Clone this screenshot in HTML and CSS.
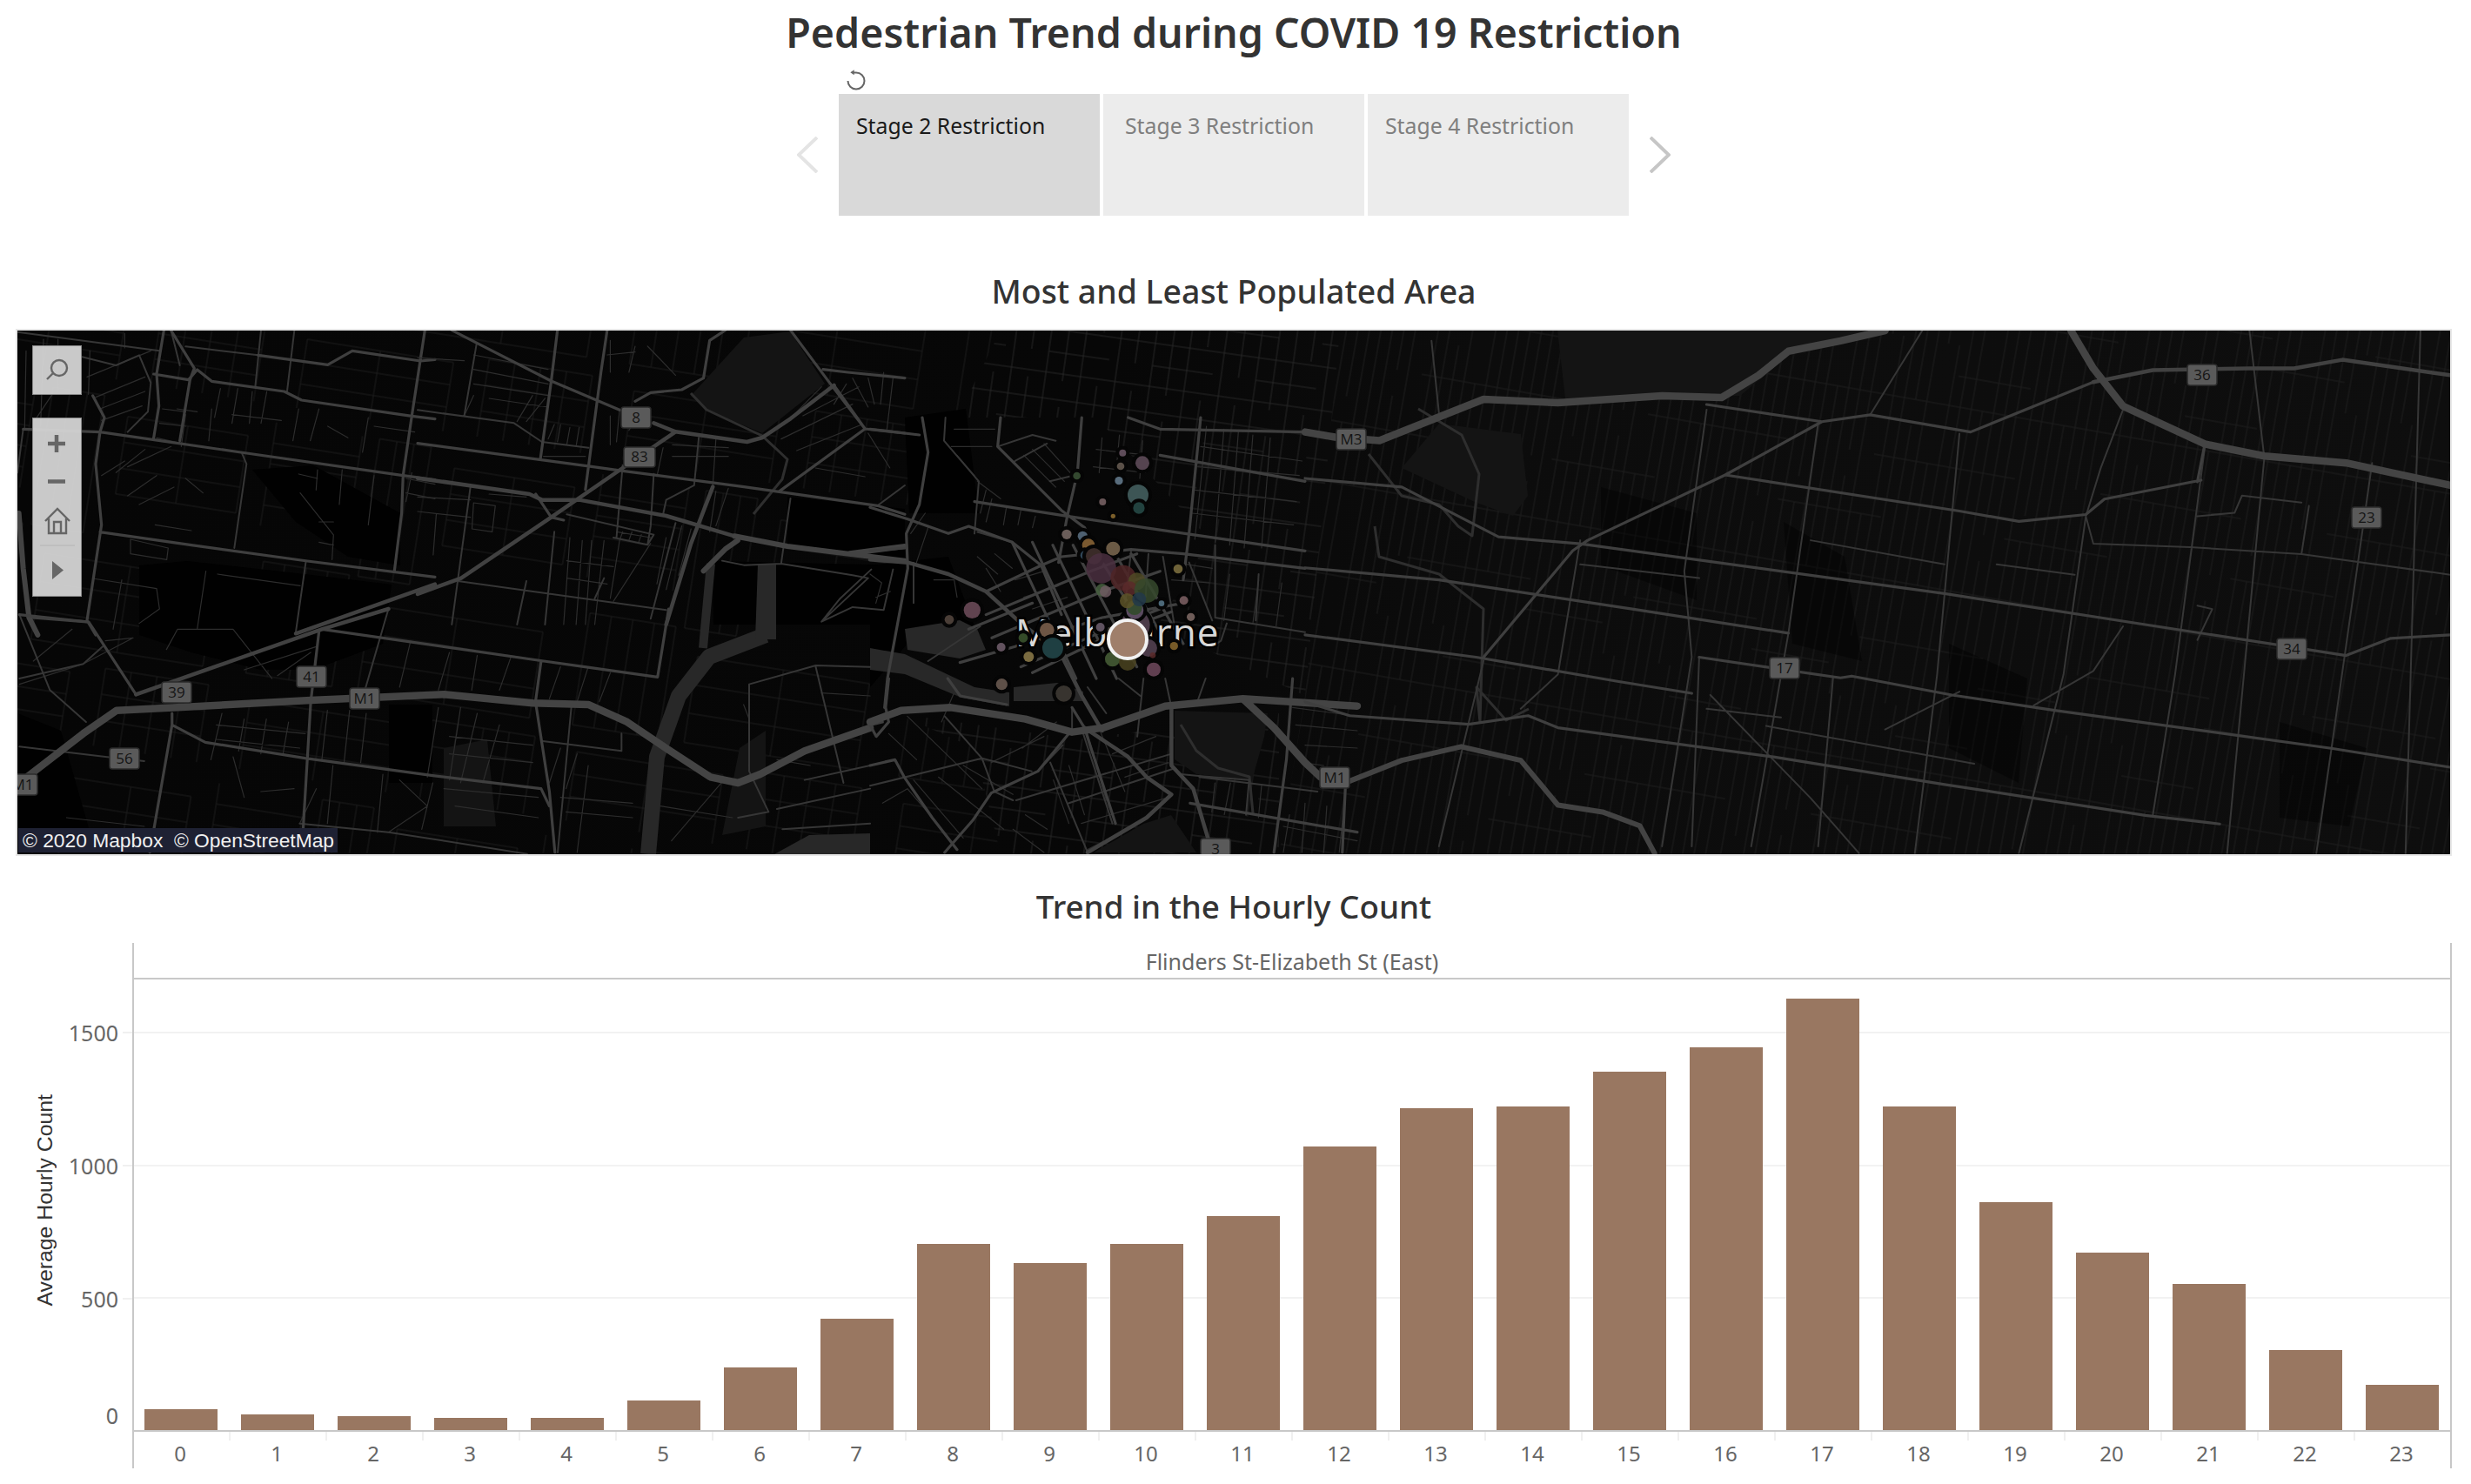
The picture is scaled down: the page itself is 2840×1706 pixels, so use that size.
FILE: index.html
```html
<!DOCTYPE html>
<html lang="en">
<head>
  <meta charset="UTF-8">
  <title>Pedestrian Trend during COVID 19 Restriction</title>
  <link rel="stylesheet" href="styles.css">
</head>
<body>
<div class="page">
  <h1 class="title">Pedestrian Trend during COVID 19 Restriction</h1>

  <div class="stage-bar">
    <svg class="chevron chevron-off" viewBox="0 0 24 42"><path d="M23 1 2 21l21 20"/></svg>
    <div class="stages">
      <svg class="reset" viewBox="0 0 24 24"><path class="reset-arc" d="M2.500 13A9.500 9.500 0 1 0 12 3.500H8"/><path class="reset-tip" d="M5.300 3.300 9.700.2V6.300Z"/></svg>
      <div class="tabs">
        <div class="tab tab-active">Stage 2 Restriction</div>
        <div class="tab tab-third">Stage 3 Restriction</div>
        <div class="tab">Stage 4 Restriction</div>
      </div>
    </div>
    <svg class="chevron chevron-on" viewBox="0 0 24 42"><path d="M1 1l21 20L1 41"/></svg>
  </div>

  <h2 class="section-title">Most and Least Populated Area</h2>

  <div class="map">
    <svg class="map-art" viewBox="20 380 2796 602" preserveAspectRatio="none">
      <defs>
        <linearGradient id="land" x1="0" x2="1" y1="0" y2="0">
          <stop offset="0" stop-color="#060606"/>
          <stop offset=".45" stop-color="#070707"/>
          <stop offset=".6" stop-color="#0c0c0c"/>
          <stop offset="1" stop-color="#0e0e0e"/>
        </linearGradient>
        <pattern id="st-east" width="264" height="420" patternUnits="userSpaceOnUse" patternTransform="rotate(10)">
          <path class="p1" d="M6 0V420M19 0V180M19 210V420M32 0V420M45 70V280M58 0V420M71 0V140M71 170V420M84 0V420M97 210V420M110 0V350M123 0V420M136 0V70M136 100V420M149 0V420M162 140V420M175 0V280M188 0V420M201 0V420M214 70V350M227 0V420M240 0V210M240 240V420M253 0V420M0 70H264M100 140H264M0 210H120M0 280H264M120 350H264M180 35H264M0 385H90"/>
        </pattern>
        <pattern id="st-west" width="380" height="420" patternUnits="userSpaceOnUse" patternTransform="rotate(9)">
          <path class="p2" d="M10 10V130M110 10V130M10 34H110M10 58H110M10 82H110M10 106H110M130 10V170M190 10V170M130 10H190M130 170H190M150 10V170M170 10V170M220 30V120M360 30V120M220 30H360M220 60H360M220 90H360M220 120H360M290 30V120M20 170V300M120 170V300M20 170H120M20 300H120M45 170V300M70 170V300M95 170V300M150 200V300M350 200V300M150 200H350M150 233H350M150 266H350M150 300H350M250 200V300M30 330V410M200 330V410M30 330H200M30 356H200M30 382H200M115 330V410M240 320V410M360 320V410M240 320H360M240 350H360M240 380H360M270 320V410M300 320V410M330 320V410"/>
        </pattern>
        <pattern id="st-mid" width="120" height="132" patternUnits="userSpaceOnUse" patternTransform="rotate(8)">
          <path class="p3" d="M10 0V132M30 0V100M50 0V132M70 30V132M90 0V132M110 0V70M0 22H120M0 48H70M0 74H120M50 100H120M0 124H120"/>
        </pattern>
      </defs>

      <rect x="20" y="380" width="2796" height="602" fill="url(#land)"/>

      <!-- street texture -->
      <path fill="url(#st-east)" d="M1540 380H2816V982H1470L1500 800Z"/>
      <path fill="url(#st-west)" d="M20 380H1150L1100 480 1040 600 1030 820 1120 860 1150 982H20Z"/>
      <path fill="url(#st-mid)" d="M1150 380H1540L1500 800 1330 720 1390 620 1260 480 1100 480Z"/>
      <path fill="url(#st-mid)" d="M1030 820 1240 850 1470 820 1470 982H1150L1120 860Z"/>

      <!-- dark flats -->
      <g class="flats">
        <path d="M160 650 215 645 350 660 450 672 440 740 360 770 300 770 220 750 160 730Z"/>
        <path d="M290 540 360 535 460 590 460 650 400 640 340 600Z"/>
        <path d="M905 571 1040 585V645L905 628Z"/>
        <path d="M819 645 1040 650V718H820Z"/>
        <path d="M447 810 497 810V900H447Z"/>
        <path d="M1000 650 1090 640 1120 720 1060 720 1000 790Z"/>
        <path d="M20 820 70 840 110 980H20Z"/>
        <path d="M1040 480 1110 470 1125 590 1045 590Z"/>
      </g>
      <g class="flats-soft">
        <path d="M2050 600 2120 640 2140 760 2060 740Z"/>
        <path d="M2240 740 2330 780 2320 900 2240 860Z"/>
        <path d="M1840 560 1950 590 1950 690 1840 650Z"/>
        <path d="M2620 830 2720 860 2700 950 2620 940Z"/>
      </g>

      <!-- parks -->
      <g class="parks">
        <path d="M794 455 855 388 908 381 948 441 876 498 812 471Z"/>
        <path d="M1654 487 1748 499 1756 570 1739 593 1697 578 1611 538Z"/>
        <path d="M1790 380 2167 380 2060 405 2000 455 1799 458Z"/>
        <path d="M1350 817 1457 820 1453 847 1439 897 1375 890 1350 873Z"/>
        <path d="M1314 947 1346 937 1375 980H1257Z"/>
        <path d="M510 860 560 850 570 950 510 950Z"/>
        <path d="M850 860 880 840 880 950 830 960Z"/>
      </g>

      <!-- water, docks and rivers -->
      <g class="water">
        <path class="w-wide" d="M745 982 755 870 780 800 815 755 880 730"/>
        <path class="w-block" d="M871 648 892 648 892 735 868 735Z"/>
        <path class="w-mid" d="M817 648 808 745"/>
        <path class="w-thin" d="M794 452 812 471 876 501 905 528 899 551 866 591"/>
        <path class="w-block" d="M1040 723 1103 713 1123 723 1133 747 1103 757 1043 747Z"/>
        <path class="w-block" d="M1000 745 1040 752 1120 790 1160 796 1160 812 1105 802 1040 775 1000 770Z"/>
        <path class="w-block" d="M1165 790 1215 785 1245 795 1245 806 1165 806Z"/>
        <path class="w-block" d="M890 982 930 960 1000 958 1000 982Z"/>
        <path class="w-thin" d="M1573 522 1611 570 1654 580 1676 605 1692 616 1700 545 1680 500 1630 470"/>
        <path class="w-thin" d="M1580 605 1585 640 1654 660 1705 700 1701 830 1697 790 1731 828 1757 815"/>
        <path class="w-thin" d="M1357 833 1375 863 1400 883 1436 893 1440 935"/>
      </g>

      <!-- west, top-left crop -->
      <g transform="translate(0 370) scale(.3333)">
        <path class="r1" d="M200 60V240M430 40V90M300 190 520 100M330 260 500 190M345 300 500 240M350 340 490 290M350 530 430 480M400 520 500 440M440 500 590 430M440 600 540 530M480 630 600 570M610 300 680 310M560 300 640 310M550 350 640 360M540 400 630 420M760 230 740 330M820 230 800 350M870 240 860 350M920 240 900 350M800 320 970 340M1030 300 1010 410M1100 300 1070 410M1130 360 1200 400M1270 330 1250 450M1290 360 1430 380M1180 510 1170 630M1290 530 1270 700M1095 510 1090 580M1030 525 1095 540M1035 590 1150 735 1145 820M1100 690H1150M1100 760 1150 770M640 540 700 590M450 750 580 780 575 820 450 800ZM320 885 540 920 550 990 480 1040M420 890 390 1060M750 870 1035 910M710 860 680 1060M535 700 660 720M1400 540 1500 560M1400 590 1500 610M1420 520 1400 620M90 100 85 370M150 60 140 360M180 250 120 340M310 100 305 250M730 300 720 410M640 320 625 430"/>
        <path class="r2" d="M60 35 550 100M640 85 890 115M900 30 880 225M1015 30 990 240M835 455 850 490 808 780M1055 825 1020 1070M280 120 400 150 480 115 520 210 510 310 440 380M620 150 590 30M80 370 60 520"/>
        <path class="r3" d="M565 30 540 180 548 290 530 400M590 30 670 160 655 200 620 410M890 115 1130 148 1215 100 1450 135 1500 130M530 180 650 200 680 165 730 205 980 240 1040 270 1420 325 1500 335M1465 30 1420 325 1390 530 1385 660 1360 860M80 370 345 380 830 450 1390 530 1500 545M345 725 660 770 1060 825 1500 880M320 255 360 330 345 380M345 380 330 490 350 700 300 1030 330 1080M110 1020 300 1035"/>
        <path class="r4" d="M1020 1075 1500 905"/>
        <path class="r5" d="M65 660 80 850 100 1020 130 1080"/>
      </g>

      <!-- north-west crop -->
      <g transform="translate(480 378) scale(.3571 .3333)">
        <path class="r1" d="M0 100 150 110M180 90 420 140M180 140 420 190M180 190 420 230M180 230 150 300M230 240 420 270M320 320 370 230M350 320 410 240M420 380 440 330M450 390 460 330M480 400 490 340M510 405 520 340M405 440H540M620 40V150M700 60 680 150M740 60 830 160M610 90 700 80M620 300V400M650 280 640 390M680 350 710 300M790 410 770 510M820 400 1000 410M820 440H1000M960 380 950 540M0 580 170 590M0 630 170 650M60 640 50 780M230 570 350 580M180 600 250 610 240 700 175 690ZM490 720 470 1020M530 730 510 1020M560 730 540 1020M600 730 570 1020M650 730 620 930M480 800 630 820M480 860 610 880M640 700 750 720M660 700 650 730M690 700 680 730M720 710 710 740M630 940 750 740M800 720 770 880M850 680 800 900M880 690 840 850M960 560 940 700M1000 550 960 680M1240 300 1420 200M1170 380 1400 260M1220 420 1430 330M1380 190 1340 260M1400 170 1450 270M1450 170 1470 260M1180 330 1300 200M1500 150 1490 260M1450 360 1520 480M1530 170 1510 350M1280 480 1440 510"/>
        <path class="r2" d="M190 50 150 300M0 280 310 325 400 390 550 410M170 545 110 1020M130 870 800 970M480 640 760 710 740 745 630 720M830 670 750 1000M905 375 890 540 800 590 790 640M1200 585 1170 810M980 800 1050 815 1170 810 1400 850 1450 860 1300 1010M1460 830 1360 930 1300 1010 1400 960 1500 970 1530 830M440 700 410 1020M1480 610 1568 540M600 860 570 930M660 470 640 720M760 500 750 680 740 745M350 870 320 1020"/>
        <path class="r3" d="M110 5 430 180 650 280M1200 5 1325 185 1440 345 1568 360M1305 140 1385 150 1568 170M1340 195 1440 345 1165 560M0 395 560 475 660 490 1050 545 1480 610 1568 640M450 5 430 180 395 450M610 5 590 150 540 555M380 570 430 650 470 660M700 250 750 220 850 210 920 170 940 40 990 5"/>
        <path class="r4" d="M760 325 830 355 1060 390 1110 375 1200 310 1340 195M830 355 660 480 430 650 140 860 0 915M0 515 360 570 400 590 520 590 800 645 1020 715M950 545 880 740 800 1020"/>
        <path class="r5" d="M1020 715 1190 750 1568 800M1390 775 1568 750M1030 730 990 760 920 835"/>
      </g>

      <!-- south-west crop -->
      <g transform="translate(0 700) scale(.6378 .3333)">
        <path class="r1" d="M400 360 380 520M440 380 430 490M480 380 470 500M520 390 510 500M590 350 580 520M630 350 620 530M660 360 650 530M390 400 550 430M390 450 540 480M570 620 540 740M600 540 590 740M690 570 680 770M720 590 770 680 700 770M790 340 770 580M830 340 810 590M860 360 830 600M900 400 870 600M810 440 960 470M810 500 960 530M1010 480 990 600M1040 500 1020 620M780 600 760 760M800 620 970 650M820 680 970 720M1010 650 1140 670M1020 700 1140 720M1060 540 1040 840M1190 680 1320 720M1350 380 1340 330M1480 290 1568 300M1400 520 1460 540M420 510 440 650M470 630 530 620M300 140 320 70 420 70 490 240M500 230 560 150M440 210 570 130M740 110 720 270M810 150 790 280M860 160 850 280M920 170 900 280M1010 200 990 310M1060 200 1040 320M1100 220 1080 320M130 70 60 180M190 110 240 100 150 190 35 260M120 720 260 750M1300 600 1210 800"/>
        <path class="r2" d="M35 475 190 510 260 525M540 740 700 770 950 845M1120 430 1120 490 975 455M35 240 150 190 185 130M35 20 90 280 155 390M1350 560 1350 260 1470 195 1568 200M1350 560 1385 700 1330 720M1400 690 1568 620M1450 590 1568 540M1470 200 1520 600M1410 760 1568 740M1030 330 1005 840M700 0 650 330"/>
        <path class="r3" d="M35 20 160 45 245 295M580 70 980 180 1185 235M975 180 965 320 990 630 1000 840M575 75 560 320 545 800M1205 0 1185 235M310 360 310 400 270 840M310 400 370 460 550 515 780 575 975 620 990 680"/>
        <path class="r4" d="M245 295 580 70 700 0"/>
        <path class="r6" d="M35 600 150 430 210 350 320 340 560 315 800 295 960 325 1060 330 1130 390 1200 480 1280 580 1330 600 1370 570 1450 490 1568 410"/>
      </g>

      <!-- city crop -->
      <g transform="translate(1000 480) scale(.3333)">
        <path class="r1" d="M290 40 430 40M280 100 420 100M370 220 450 280M400 250 380 330M420 280 400 360M470 310 460 370M520 320 510 370M570 340 560 380M1160 30 1120 420M1220 40 1190 430M1270 50 1240 440M1320 60 1290 450M1380 70 1350 450M1140 100 1490 150M1130 170 1480 200M1120 250 1470 290M1110 330 1460 370M1050 500 1180 520M1040 560 1170 570M1240 540 1220 700M1340 560 1320 710M1420 570 1400 720M370 480 440 540M400 520 450 600M430 470 490 520M500 560 600 530M530 620 650 580M560 660 680 620M140 400 190 330M160 500 200 380M20 620 70 600M220 560 290 560 300 620M0 540 40 570 20 640M800 70 790 190M860 60 850 170M940 80 930 210M780 110 960 130M770 170 950 190M530 130 640 240M560 110 670 220M600 90 690 190M300 130 360 200"/>
        <path class="r2" d="M260 0 255 80 375 220 360 400M900 460 880 640M960 470 950 620M1010 480 1050 720M1100 500 1180 700M1190 440 1190 690 1500 740M1340 540 1330 700M1230 710 1210 770 1180 790M370 395 490 430M440 100 560 60 640 80M500 150 610 90M620 220 700 200M150 500 150 640M200 840 380 720"/>
        <path class="r3" d="M180 0 200 120 170 300 125 400 130 520 60 900 50 1000M450 0 440 100 660 320 740 380 790 500M730 0 715 190 680 340 650 500M1140 0 1100 400 1080 560M0 40 170 60M890 0 1000 40 1500 50M1000 130 1500 220M360 290 680 340 1050 395 1500 460M0 310 130 350 270 400 340 375 490 430 590 510 660 680M0 460 120 450M400 600 590 510 660 480 900 455 1080 470 1500 520"/>
        <path class="r3" d="M400 680 760 530 920 470M420 760 800 600 1000 530M340 730 560 640M560 880 850 740 1040 670M520 860 820 730 1000 660M310 845 500 790 800 690 1080 640M490 430 710 900M560 430 780 900M630 440 850 900M700 440 920 860M770 450 990 800M840 460 1010 760M900 470 1080 780"/>
        <path class="r4" d="M0 490 130 500 270 540 400 600 510 700 660 820 730 960 800 1080"/>
      </g>

      <!-- south-city crop -->
      <g transform="translate(1000 780) scale(.3571 .3333)">
        <path class="r1" d="M120 130 360 380M150 280 60 190M270 50 230 150M40 430 120 380 200 480M140 350 300 550M220 340 430 520M300 300 460 400M390 290 560 200M490 240 600 150M460 520 560 600M500 470 570 520M590 350 640 500M640 300 690 470M700 190 760 420M740 180 820 390M780 260 920 200M820 340 960 290M680 500 960 410M700 590 880 490M1110 360 1100 460M1160 360 1140 470M1260 370 1250 480M1360 100 1568 130M1370 160 1568 180M1400 230 1568 240M1390 290 1460 300M1350 470 1330 600M1400 430 1390 600M1470 440 1460 600M1530 390 1510 600M1330 510 1568 560"/>
        <path class="r2" d="M0 370 360 275 520 320M460 420 400 390 360 275 240 130M470 420 970 260M640 430 980 310M580 290 700 600M680 170 780 500M1000 330 1050 335 1220 350 1210 470M1060 340 1440 390M1080 0 1050 90M700 30 760 120M800 0 870 60M950 0 970 100M880 0 860 200M650 100 650 180M540 320 620 230"/>
        <path class="r3" d="M60 0 50 100 60 150 20 200 0 160 40 150M0 300 80 280 110 340 200 480 280 590M640 190 540 320 440 370 390 395 330 490 240 600M650 100 690 170 790 500M1030 430 1568 530M1360 0 1340 280 1300 600M1530 370 1520 600M250 0 290 60 440 90"/>
        <path class="r4" d="M690 170 830 270 890 340 970 400 890 480 700 600M970 100 970 300 1040 380 1090 560"/>
        <path class="r6" d="M0 150 100 110 260 100 500 140 650 185 750 170 950 95 1200 70 1300 170 1400 290 1450 340M1200 70 1568 95"/>
      </g>

      <!-- east crop -->
      <g transform="translate(1500 380) scale(.8546 .3953)">
        <path class="r2" d="M1435 385 1380 1220 1360 1520M1270 0 1290 370 1240 1520M1210 340 1170 1000 1140 1410M880 300 850 1000 820 1520M690 270 650 880 600 1500M540 230 510 700 520 950 480 1500M370 610 340 1000 290 1100M830 0 760 245M1100 230 1070 400 1050 540 1020 1000 960 1520M545 1060 680 1360 745 1520M240 960 180 1500M170 30 180 240M530 950 520 1500M710 1010 690 1500M1500 0 1480 1520M1050 540 1060 620 1190 630 1340 650 1540 710M680 610 860 680M930 680 1035 710M1340 500 1260 480 1250 530 1200 540M1200 800 1220 810 1200 900M1340 650 1350 510M370 680 530 720M540 1100 640 1125M620 1150 900 1260M1100 860 1060 990 980 1090M880 1050 780 1160"/>
        <path class="r3" d="M0 430 130 455 260 600 370 620 860 765 1130 855 1310 915 1400 945 1460 895 1540 885M0 690 180 725 440 810 650 880M0 885 230 950 420 1020 520 1055M530 950 640 985 720 1010 735 1005 870 1060 1010 1105 1380 1215 1540 1270M0 1080 60 1120 220 1145 300 1120 340 1155 630 1240 860 1320 1130 1410 1230 1435M565 420 880 525 960 555 1050 535 1075 490 1205 435M1060 150 895 295 760 245 695 265 565 420 380 610 360 640 240 950M540 215 695 265M1210 330 1200 440"/>
        <path class="r4" d="M1060 150 1140 115 1270 110 1330 110 1395 85 1540 130"/>
        <path class="r6" d="M0 295 40 310 100 320 170 260 240 200 340 210 480 190 560 195 610 130 650 60 720 30 780 0M1030 0 1060 110 1100 220 1210 330 1290 365 1400 385 1540 450"/>
        <path class="r5" d="M130 1250 210 1210 290 1250 340 1380 400 1400 450 1440 470 1520M60 1310 130 1250"/>
      </g>

      <text class="place" x="1167" y="743">Melbourne</text>

      <!-- sensor circles -->
      <g class="sensors" transform="translate(1000 480) scale(.3333)">
        <circle cx="871" cy="122" r="12" fill="#5e4c59"/>
        <circle cx="939" cy="157" r="24" fill="#554450"/>
        <circle cx="864" cy="168" r="13" fill="#5a5048"/>
        <circle cx="713" cy="201" r="13" fill="#33482f"/>
        <circle cx="858" cy="218" r="14" fill="#586c7c"/>
        <circle cx="924" cy="267" r="36" fill="#3d5555"/>
        <circle cx="927" cy="312" r="20" fill="#22423f"/>
        <circle cx="802" cy="291" r="12" fill="#6a5759"/>
        <circle cx="838" cy="340" r="8" fill="#7b5f2a"/>
        <circle cx="678" cy="403" r="17" fill="#6b5e5a"/>
        <circle cx="733" cy="409" r="17" fill="#4e6070"/>
        <circle cx="753" cy="440" r="22" fill="#7a5930"/>
        <circle cx="838" cy="452" r="24" fill="#6b5a45"/>
        <circle cx="740" cy="475" r="15" fill="#2f4556"/>
        <circle cx="772" cy="478" r="28" fill="#3a2b28"/>
        <circle cx="915" cy="715" r="50" fill="#4a3a48"/>
        <circle cx="960" cy="795" r="30" fill="#4a3a48"/>
        <circle cx="913" cy="665" r="30" fill="#5a4a60"/>
        <circle cx="797" cy="520" r="52" fill="#4a2f3f" class="flat"/>
        <circle cx="873" cy="553" r="44" fill="#4f2426" class="flat"/>
        <circle cx="920" cy="565" r="30" fill="#4f4a25" class="flat"/>
        <circle cx="895" cy="590" r="25" fill="#5a2a2a" class="flat"/>
        <circle cx="953" cy="597" r="42" fill="#36492d" class="flat"/>
        <circle cx="800" cy="595" r="22" fill="#46603f" class="flat"/>
        <circle cx="812" cy="600" r="20" fill="#6f5a62" class="flat"/>
        <circle cx="912" cy="655" r="26" fill="#2f4a28" class="flat"/>
        <circle cx="887" cy="632" r="26" fill="#5d5428" class="flat"/>
        <circle cx="928" cy="627" r="24" fill="#22384a" class="flat"/>
        <circle cx="1062" cy="522" r="16" fill="#6e6238"/>
        <circle cx="1082" cy="631" r="15" fill="#6d5457"/>
        <circle cx="1005" cy="641" r="10" fill="#4c6878"/>
        <circle cx="1106" cy="688" r="14" fill="#6e5c58"/>
        <circle cx="352" cy="664" r="29" fill="#60434f"/>
        <circle cx="273" cy="697" r="16" fill="#4a3e37"/>
        <circle cx="610" cy="733" r="25" fill="#6d5544"/>
        <circle cx="528" cy="760" r="16" fill="#344a28"/>
        <circle cx="794" cy="723" r="15" fill="#5f5260"/>
        <circle cx="630" cy="795" r="36" fill="#1f3f42"/>
        <circle cx="452" cy="792" r="15" fill="#62525e"/>
        <circle cx="547" cy="825" r="18" fill="#7a6b40"/>
        <circle cx="1048" cy="788" r="14" fill="#775a28"/>
        <circle cx="836" cy="833" r="26" fill="#3e5230"/>
        <circle cx="888" cy="843" r="30" fill="#4a4320" class="flat"/>
        <circle cx="975" cy="820" r="10" fill="#5a2a2a" class="flat"/>
        <circle cx="978" cy="869" r="24" fill="#603f50"/>
        <circle cx="454" cy="920" r="20" fill="#5e5048"/>
        <circle cx="668" cy="952" r="28" fill="#38342f"/>
      </g>
      <circle class="sensor-picked" cx="1296" cy="735" r="22"/>

      <!-- road shields -->
      <g class="shields">
        <g><rect x="714" y="468" width="34" height="24" rx="3"/><text x="731" y="486">8</text></g>
        <g><rect x="717" y="514" width="36" height="23" rx="3"/><text x="735" y="531">83</text></g>
        <g><rect x="1536" y="493" width="34" height="24" rx="3"/><text x="1553" y="511">M3</text></g>
        <g><rect x="2514" y="419" width="34" height="24" rx="3"/><text x="2531" y="437">36</text></g>
        <g><rect x="2703" y="583" width="34" height="24" rx="3"/><text x="2720" y="601">23</text></g>
        <g><rect x="2617" y="734" width="34" height="24" rx="3"/><text x="2634" y="752">34</text></g>
        <g><rect x="2034" y="756" width="34" height="24" rx="3"/><text x="2051" y="774">17</text></g>
        <g><rect x="1517" y="882" width="34" height="24" rx="3"/><text x="1534" y="900">M1</text></g>
        <g><rect x="186" y="784" width="34" height="24" rx="3"/><text x="203" y="802">39</text></g>
        <g><rect x="341" y="766" width="34" height="24" rx="3"/><text x="358" y="784">41</text></g>
        <g><rect x="402" y="791" width="34" height="24" rx="3"/><text x="419" y="809">M1</text></g>
        <g><rect x="126" y="860" width="34" height="24" rx="3"/><text x="143" y="878">56</text></g>
        <g><rect x="9" y="890" width="34" height="24" rx="3"/><text x="26" y="908">M1</text></g>
        <g><rect x="1380" y="964" width="34" height="24" rx="3"/><text x="1397" y="982">3</text></g>
      </g>
    </svg>

    <div class="map-tools">
      <div class="tool-box tool-search">
        <svg class="tool-svg" viewBox="0 0 55 55"><circle cx="30" cy="25" r="9" class="tool-line"/><path class="tool-line" d="M23 31 16 38"/></svg>
      </div>
      <div class="tool-box tool-stack">
        <svg class="tool-svg" viewBox="0 0 55 204">
          <path class="tool-bold" d="M17 29H37M27 19V39M17 72.500H37"/>
          <path class="tool-line" d="M14 118 28 104 42 118M18 115V132H38V115M24 132V119H32V132"/>
          <path class="tool-sep" d="M8 146H48"/>
          <path class="tool-fill" d="M22 164 35 174.500 22 185Z"/>
        </svg>
      </div>
    </div>

    <div class="attribution">© 2020 Mapbox&nbsp; © OpenStreetMap</div>
  </div>

  <h2 class="section-title section-title-chart">Trend in the Hourly Count</h2>

  <div class="chart">
    <div class="y-title-col"><span class="y-title">Average Hourly Count</span></div>
    <div class="y-ticks">
      <div class="y-tick">1500</div>
      <div class="y-tick">1000</div>
      <div class="y-tick">500</div>
      <div class="y-tick y-tick-zero">0</div>
    </div>
    <div class="plot">
      <div class="panel-label">Flinders St-Elizabeth St (East)</div>
      <div class="bars">
        <div class="bar-cell"><div class="bar" style="height:24px"></div></div>
        <div class="bar-cell"><div class="bar" style="height:18px"></div></div>
        <div class="bar-cell"><div class="bar" style="height:16px"></div></div>
        <div class="bar-cell"><div class="bar" style="height:14px"></div></div>
        <div class="bar-cell"><div class="bar" style="height:14px"></div></div>
        <div class="bar-cell"><div class="bar" style="height:34px"></div></div>
        <div class="bar-cell"><div class="bar" style="height:72px"></div></div>
        <div class="bar-cell"><div class="bar" style="height:128px"></div></div>
        <div class="bar-cell"><div class="bar" style="height:214px"></div></div>
        <div class="bar-cell"><div class="bar" style="height:192px"></div></div>
        <div class="bar-cell"><div class="bar" style="height:214px"></div></div>
        <div class="bar-cell"><div class="bar" style="height:246px"></div></div>
        <div class="bar-cell"><div class="bar" style="height:326px"></div></div>
        <div class="bar-cell"><div class="bar" style="height:370px"></div></div>
        <div class="bar-cell"><div class="bar" style="height:372px"></div></div>
        <div class="bar-cell"><div class="bar" style="height:412px"></div></div>
        <div class="bar-cell"><div class="bar" style="height:440px"></div></div>
        <div class="bar-cell"><div class="bar" style="height:496px"></div></div>
        <div class="bar-cell"><div class="bar" style="height:372px"></div></div>
        <div class="bar-cell"><div class="bar" style="height:262px"></div></div>
        <div class="bar-cell"><div class="bar" style="height:204px"></div></div>
        <div class="bar-cell"><div class="bar" style="height:168px"></div></div>
        <div class="bar-cell"><div class="bar" style="height:92px"></div></div>
        <div class="bar-cell"><div class="bar" style="height:52px"></div></div>
      </div>
      <div class="hours">
        <span class="hour">0</span><span class="hour">1</span><span class="hour">2</span><span class="hour">3</span><span class="hour">4</span><span class="hour">5</span><span class="hour">6</span><span class="hour">7</span><span class="hour">8</span><span class="hour">9</span><span class="hour">10</span><span class="hour">11</span><span class="hour">12</span><span class="hour">13</span><span class="hour">14</span><span class="hour">15</span><span class="hour">16</span><span class="hour">17</span><span class="hour">18</span><span class="hour">19</span><span class="hour">20</span><span class="hour">21</span><span class="hour">22</span><span class="hour">23</span>
      </div>
    </div>
  </div>
</div>
</body>
</html>
```

FILE: styles.css
```css
body {
  margin: 0;
  background: #fff;
  font-family: "Noto Sans", sans-serif;
  color: #333;
}

.page {
  width: 2836px;
  overflow: hidden;
}

.title {
  margin: 0;
  height: 76px;
  line-height: 74px;
  text-align: center;
  font-size: 46.500px;
  font-weight: 600;
  color: #333;
}

/* stage navigator */
.stage-bar {
  display: flex;
  justify-content: center;
  align-items: flex-start;
  gap: 24px;
  height: 172px;
}

.chevron {
  width: 24px;
  height: 42px;
  margin-top: 81px;
  fill: none;
  stroke-width: 4;
}

.chevron-off { stroke: #e4e4e4; }
.chevron-on { stroke: #c6c6c6; }

.stages { width: 908px; }

.reset {
  display: block;
  width: 24px;
  height: 24px;
  margin: 4px 0 4px 8px;
}

.reset-arc { fill: none; stroke: #666; stroke-width: 2; }
.reset-tip { fill: #666; }

.tabs {
  display: flex;
  gap: 4px;
}

.tab {
  width: 300px;
  height: 140px;
  box-sizing: border-box;
  padding: 19px 0 0 20px;
  background: #ececec;
  font-size: 24.800px;
  line-height: 34px;
  color: #7f7f7f;
}

.tab-active {
  background: #d9d9d9;
  color: #1a1a1a;
}

.tab-third { padding-left: 25px; }

.section-title {
  margin: 60px 0 16px;
  height: 54px;
  line-height: 54px;
  text-align: center;
  font-size: 37.400px;
  font-weight: 500;
  color: #333;
}

.section-title-chart {
  margin: 31px 0 15px;
  font-size: 36.800px;
}

/* map */
.map {
  position: relative;
  margin: 0 18px;
  height: 602px;
  border: 2px solid #e8e8e8;
  background: #090909;
  overflow: hidden;
}

.map-art {
  display: block;
  width: 2796px;
  height: 602px;
}

.map-art path,
.map-art circle { vector-effect: non-scaling-stroke; }

.p1 { fill: none; stroke: #1d1d1d; stroke-width: 1; }
.p2 { fill: none; stroke: #1b1b1b; stroke-width: 1; }
.p3 { fill: none; stroke: #262626; stroke-width: 1; }

.flats path { fill: #010101; }
.flats-soft path { fill: #000; fill-opacity: .4; }
.parks path { fill: #141414; }

.r1, .r2, .r3, .r4, .r5, .r6 {
  fill: none;
  stroke-linejoin: round;
  stroke-linecap: round;
}

.r1 { stroke: #2d2d2d; stroke-width: 1.200; }
.r2 { stroke: #363636; stroke-width: 2; }
.r3 { stroke: #3f3f3f; stroke-width: 3.200; }
.r4 { stroke: #414141; stroke-width: 4.500; }
.r5 { stroke: #434343; stroke-width: 6; }
.r6 { stroke: #444; stroke-width: 8.500; }

.water path {
  fill: none;
  stroke: #282828;
  stroke-linejoin: round;
}

.water .w-wide { stroke-width: 18; }
.water .w-mid { stroke-width: 10; }
.water .w-thin { stroke-width: 3; stroke: #2e2e2e; }
.water .w-block { fill: #282828; stroke: none; }

.place {
  font-family: "Open Sans", sans-serif;
  font-size: 44px;
  letter-spacing: 1px;
  fill: #d8d8d8;
  stroke: #000;
  stroke-width: 5px;
  paint-order: stroke;
}

.sensors circle {
  stroke: #050505;
  stroke-width: 8;
  paint-order: stroke;
}

.sensors .flat { stroke: none; opacity: .85; }

.sensor-picked {
  fill: #9f7f6b;
  stroke: #f2f2f2;
  stroke-width: 4;
}

.shields rect {
  fill: #5a5a5a;
  stroke: #2c2c2c;
  stroke-width: 1.500;
}

.shields text {
  font-family: "Open Sans", sans-serif;
  font-size: 17px;
  text-anchor: middle;
  fill: #141414;
}

.map-tools {
  position: absolute;
  left: 18px;
  top: 18px;
  display: flex;
  flex-direction: column;
  gap: 28px;
}

.tool-box {
  width: 55px;
  background: rgba(214, 214, 214, .94);
  box-shadow: 0 0 0 1px #888;
}

.tool-search { height: 55px; }
.tool-stack { height: 204px; }

.tool-svg {
  display: block;
  width: 100%;
  height: 100%;
}

.tool-line { fill: none; stroke: #666; stroke-width: 2.400; }
.tool-bold { fill: none; stroke: #666; stroke-width: 4.500; }
.tool-sep { stroke: #b4b4b4; stroke-width: 1; }
.tool-fill { fill: #666; }

.attribution {
  position: absolute;
  left: 1px;
  bottom: 2px;
  width: 367px;
  height: 28px;
  box-sizing: border-box;
  padding-left: 5px;
  background: #1e2133;
  font-family: "Liberation Sans", sans-serif;
  font-size: 22.800px;
  line-height: 28px;
  white-space: nowrap;
  color: #f0f0f0;
}

/* chart */
.chart {
  display: flex;
  height: 604px;
}

.y-title-col {
  width: 60px;
  height: 592px;
  display: flex;
  justify-content: center;
  align-items: center;
}

.y-title {
  writing-mode: vertical-rl;
  transform: rotate(180deg);
  margin-left: 44px;
  font-family: "Liberation Sans", sans-serif;
  font-size: 24.800px;
  color: #333;
}

.y-ticks {
  width: 92px;
  padding-top: 26px;
  flex: none;
}

.y-tick {
  height: 153px;
  display: flex;
  align-items: center;
  justify-content: flex-end;
  font-size: 25px;
  color: #666;
}

.y-tick::after {
  content: "";
  width: 11px;
  height: 2px;
  margin-left: 5px;
  background: #f0f0f0;
}

.y-tick-zero { height: 116px; }
.y-tick-zero::after { background: transparent; }

.plot {
  width: 2666px;
  box-sizing: border-box;
  flex: none;
  border-left: 2px solid #c8c8c8;
  border-right: 2px solid #c8c8c8;
}

.panel-label {
  height: 42px;
  box-sizing: border-box;
  border-bottom: 2px solid #c8c8c8;
  text-align: center;
  font-size: 25px;
  line-height: 42px;
  color: #666;
}

.bars {
  display: grid;
  grid-template-columns: repeat(24, 111px);
  width: 2662px;
  height: 520px;
  border-bottom: 2px solid #c8c8c8;
  box-sizing: border-box;
  background-image: repeating-linear-gradient(to top, transparent 0 150.700px, #f2f2f2 150.700px 152.700px);
}

.bar-cell {
  display: flex;
  align-items: flex-end;
  justify-content: center;
  margin-left: -2px;
  margin-right: 2px;
}

.bar {
  width: 84px;
  background: #997761;
}

.hours {
  display: grid;
  grid-template-columns: repeat(24, 111px);
  width: 2662px;
  height: 42px;
  overflow: hidden;
  background-image: linear-gradient(to right, transparent 109px, #f0f0f0 109px);
  background-size: 111px 10px;
  background-repeat: repeat-x;
}

.hour {
  margin-left: -2px;
  text-align: center;
  padding-right: 3px;
  font-size: 24px;
  line-height: 50px;
  color: #666;
}
```
